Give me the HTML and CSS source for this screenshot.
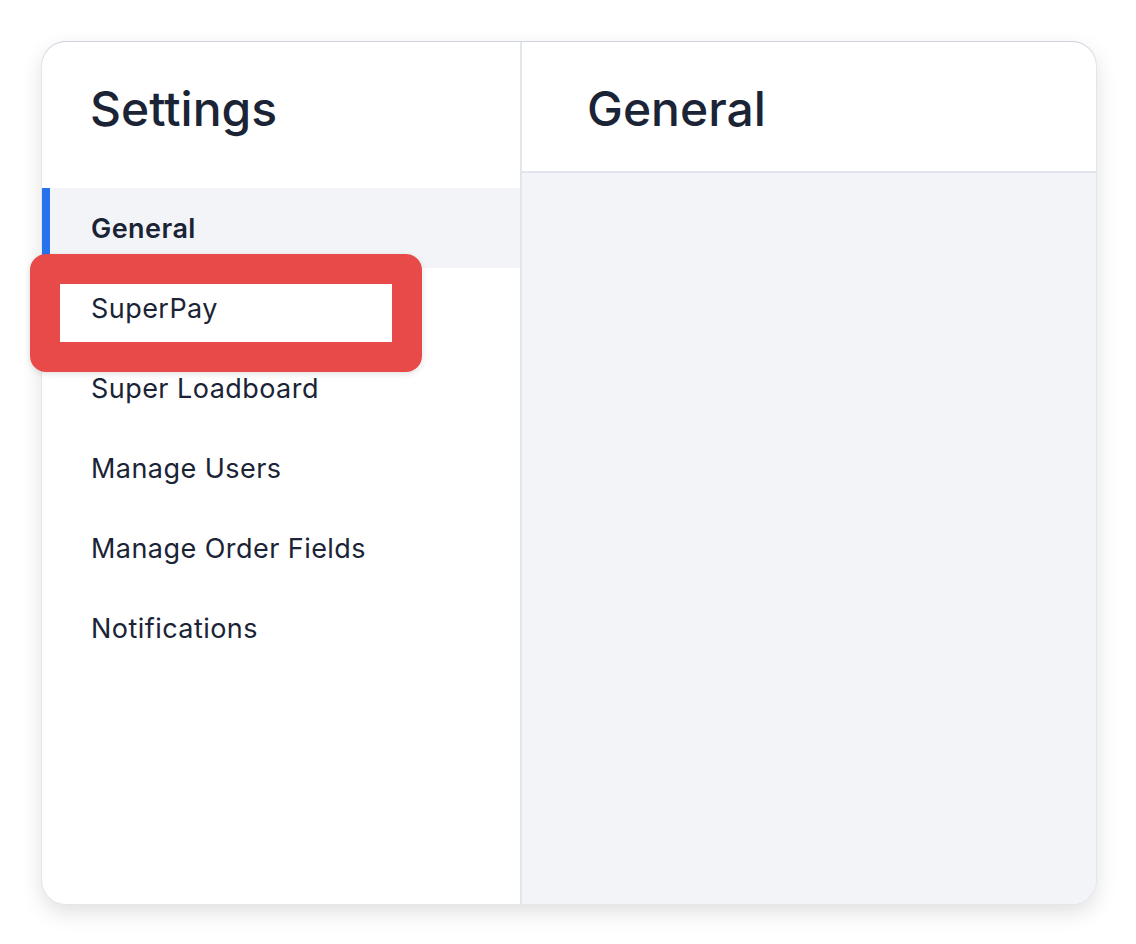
FILE: index.html
```html
<!DOCTYPE html>
<html>
<head>
<meta charset="utf-8">
<link rel="stylesheet" href="styles.css">
</head>
<body>
<div class="card">
  <aside class="sidebar">
    <h1 class="title">Settings</h1>
    <nav class="nav">
      <div class="item active">General</div>
      <div class="item">SuperPay</div>
      <div class="item">Super Loadboard</div>
      <div class="item">Manage Users</div>
      <div class="item">Manage Order Fields</div>
      <div class="item">Notifications</div>
    </nav>
  </aside>
  <main class="main">
    <header class="main-header"><h2 class="title">General</h2></header>
    <div class="main-body"></div>
  </main>
  <div class="highlight"></div>
</div>
</body>
</html>
```

FILE: styles.css
```css
* { box-sizing: border-box; }
html, body { margin: 0; padding: 0; background: #ffffff; }
body {
  font-family: Inter, "Noto Sans", sans-serif;
  color: #1b2436;
  padding: 42px 40px 40px 42px;
}
.card {
  position: relative;
  width: 1054px;
  height: 862px;
  border-radius: 24px;
  background: #fff;
  display: flex;
  box-shadow: 0 -1px 0 #cfd4dc, 0 0 0 1px #e3e6eb, 0 8px 22px rgba(0,0,0,0.13);
}
.sidebar {
  width: 480px;
  border-right: 2px solid #e2e5eb;
  display: flex;
  flex-direction: column;
  border-radius: 24px 0 0 24px;
  overflow: hidden;
}
.title {
  margin: 0;
  font-size: 48px;
  font-weight: 500;
  letter-spacing: 0;
  line-height: 1;
}
.sidebar .title {
  height: 146px;
  padding: 43px 0 0 48px;
}
.nav { display: flex; flex-direction: column; }
.item {
  height: 80px;
  display: flex;
  align-items: center;
  padding-left: 49px;
  font-size: 27px;
  font-weight: 400;
  letter-spacing: 0.45px;
}
.item.active {
  background: #f3f4f8;
  font-weight: 600;
  border-left: 8px solid #2673ee;
  padding-left: 41px;
}
.main {
  flex: 1;
  display: flex;
  flex-direction: column;
  border-radius: 0 24px 24px 0;
  overflow: hidden;
}
.main-header {
  height: 131px;
  border-bottom: 2px solid #e2e5eb;
  padding: 43px 0 0 65px;
}
.main-body {
  flex: 1;
  background: #f3f4f8;
}
.highlight {
  position: absolute;
  left: -12px;
  top: 212px;
  width: 392px;
  height: 118px;
  border: 30px solid #e74a48;
  border-radius: 16px;
  box-shadow: 0 2px 6px rgba(0,0,0,0.12);
}
```
